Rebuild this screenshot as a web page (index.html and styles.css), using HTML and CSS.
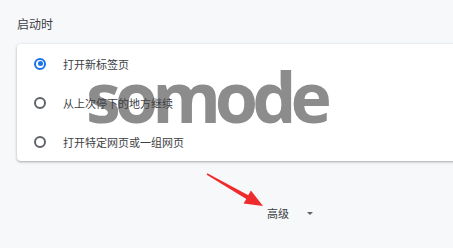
FILE: index.html
```html
<!DOCTYPE html>
<html lang="zh">
<head>
<meta charset="utf-8">
<link rel="stylesheet" href="styles.css">
</head>
<body>
<div class="page">
  <div class="section-title">启动时</div>
  <div class="card">
    <div class="row"><span class="radio checked"></span><span class="label">打开新标签页</span></div>
    <div class="row"><span class="radio"></span><span class="label">从上次停下的地方继续</span></div>
    <div class="row"><span class="radio"></span><span class="label">打开特定网页或一组网页</span></div>
  </div>
  <div class="advanced"><span class="adv-text">高级</span><span class="caret"></span></div>
</div>
<div class="watermark">somode</div>
<svg class="arrow" width="453" height="248" viewBox="0 0 453 248">
  <path d="M207.3 173.2 L248.3 195.3 L250.9 190.6 L263 206 L243.6 203.6 L246.3 199.1 L206.7 174.8 Z" fill="#ef2b2b"/>
</svg>
</body>
</html>
```

FILE: styles.css
```css
html, body {
  margin: 0;
  padding: 0;
  width: 453px;
  height: 248px;
  overflow: hidden;
  background: #f7f8fa;
  font-family: "Noto Sans CJK SC", "Noto Sans", sans-serif;
  position: relative;
}
.page {
  padding: 17px 0 0 17px;
}
.section-title {
  font-size: 12px;
  line-height: 14px;
  color: #3c4043;
  height: 14px;
  margin-bottom: 13px;
}
.card {
  width: 460px;
  background: #fff;
  border-radius: 4px 0 0 4px;
  box-shadow: 0 1px 2px rgba(60, 64, 67, 0.3), 0 1px 3px 1px rgba(60, 64, 67, 0.1);
}
.row {
  height: 39px;
  display: flex;
  align-items: center;
  padding-left: 17px;
}
.radio {
  width: 8px;
  height: 8px;
  border: 2px solid #5f6368;
  border-radius: 50%;
  margin-right: 17px;
  box-sizing: content-box;
  position: relative;
}
.radio.checked {
  border-color: #1a73e8;
}
.radio.checked::after {
  content: "";
  position: absolute;
  left: 1.5px;
  top: 1.5px;
  width: 5px;
  height: 5px;
  border-radius: 50%;
  background: #1a73e8;
}
.label {
  font-size: 11px;
  color: #3c4043;
  position: relative;
  z-index: 2;
}
.advanced {
  display: flex;
  align-items: center;
  margin-top: 45px;
  padding-left: 250px;
  height: 14px;
}
.adv-text {
  font-size: 11px;
  color: #3c4043;
}
.caret {
  margin-left: 18px;
  width: 0;
  height: 0;
  border-left: 3px solid transparent;
  border-right: 3px solid transparent;
  border-top: 3px solid #5f6368;
}
.watermark {
  position: absolute;
  z-index: 1;
  left: 86px;
  top: 48px;
  font-family: "Open Sans", sans-serif;
  font-weight: 700;
  font-size: 70px;
  line-height: 96px;
  letter-spacing: -6px;
  color: #8c8c8c;
}
.arrow {
  position: absolute;
  left: 0;
  top: 0;
}
```
